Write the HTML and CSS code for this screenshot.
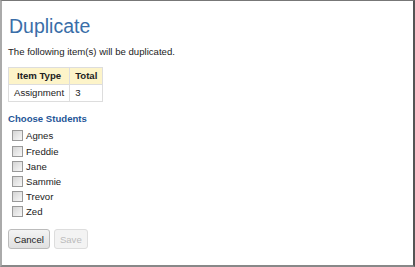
FILE: index.html
```html
<!DOCTYPE html>
<html>

<head>
    <meta charset="UTF-8">
    <title>Duplicate</title>
    <link rel="stylesheet" href="styles.css">
</head>

<body>
    <div class="dialog">
        <h1>Duplicate</h1>
        <p class="intro">The following item(s) will be duplicated.</p>

        <table class="items">
            <thead>
                <tr>
                    <th>Item Type</th>
                    <th>Total</th>
                </tr>
            </thead>
            <tbody>
                <tr>
                    <td>Assignment</td>
                    <td>3</td>
                </tr>
            </tbody>
        </table>

        <h2>Choose Students</h2>
        <ul class="students">
            <li><label><input type="checkbox"> Agnes</label></li>
            <li><label><input type="checkbox"> Freddie</label></li>
            <li><label><input type="checkbox"> Jane</label></li>
            <li><label><input type="checkbox"> Sammie</label></li>
            <li><label><input type="checkbox"> Trevor</label></li>
            <li><label><input type="checkbox"> Zed</label></li>
        </ul>

        <div class="actions">
            <button class="btn">Cancel</button>
            <button class="btn" disabled>Save</button>
        </div>
    </div>
</body>

</html>
```
FILE: styles.css
```css
body {
    margin: 0;
    padding: 0;
    font-family: 'Liberation Sans', Arial, sans-serif;
    font-size: 9.6px;
    color: #222;
    background: #fff;
}

.dialog {
    box-sizing: border-box;
    width: 415px;
    height: 267px;
    border-top: 1px solid #777;
    border-left: 2px solid #aaa;
    border-right: 2px solid #555;
    border-bottom: 2px solid #888;
    padding: 0 0 0 6px;
}

h1 {
    font-weight: normal;
    font-size: 19.5px;
    color: #3a6ea8;
    margin: 13px 0 0 1px;
    line-height: 24px;
}

.intro {
    margin: 8px 0 9px;
    line-height: 12px;
}

.items {
    border-collapse: collapse;
}

.items th, .items td {
    border: 1px solid #ddd;
    padding: 2px 5px;
    line-height: 12px;
}

.items th {
    background: #fdf4c9;
    font-weight: bold;
    text-align: center;
}

.items td {
    text-align: left;
}

h2 {
    font-size: 9.6px;
    font-weight: bold;
    color: #1f5597;
    margin: 11px 0 3.4px;
    line-height: 12px;
}

.students {
    list-style: none;
    margin: 0;
    padding: 0 0 0 4px;
}

.students li {
    height: 15.1px;
    display: flex;
    align-items: center;
}

.students label {
    display: flex;
    align-items: center;
    gap: 3px;
}

.students input {
    appearance: none;
    box-sizing: border-box;
    margin: 0;
    width: 11px;
    height: 11px;
    border: 1px solid #999;
    background: linear-gradient(135deg, #d4d4d4, #f8f8f8);
}

.actions {
    display: flex;
    gap: 4px;
    margin-top: 10.4px;
}

.btn {
    font-family: 'Liberation Sans', Arial, sans-serif;
    font-size: 9.6px;
    padding: 0 5px;
    height: 20px;
    border: 1px solid #bbb;
    border-radius: 3px;
    background: linear-gradient(#f4f4f4, #e0e0e0);
    color: #222;
}

.btn:disabled {
    color: #bbb;
    background: #f3f3f3;
    border-color: #ddd;
}
```
